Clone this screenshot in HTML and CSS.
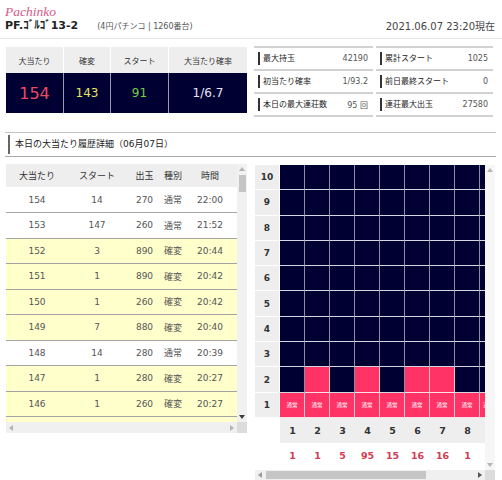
FILE: index.html
```html
<!DOCTYPE html>
<html lang="ja">
<head>
<meta charset="utf-8">
<title>PF.ｺﾞﾙｺﾞ13-2</title>
<link rel="stylesheet" href="styles.css">
</head>
<body>
<header class="top">
  <div class="brand">
    <div class="logo">Pachinko</div>
    <div class="machine"><span class="name">PF.ｺﾞﾙｺﾞ13-2</span><span class="sub">(4円パチンコ | 1260番台)</span></div>
  </div>
  <div class="date">2021.06.07 23:20現在</div>
</header>

<section class="summary">
  <div class="big">
    <div class="h">大当たり</div>
    <div class="h">確変</div>
    <div class="h">スタート</div>
    <div class="h">大当たり確率</div>
    <div class="v red">154</div>
    <div class="v yellow">143</div>
    <div class="v green">91</div>
    <div class="v pale">1/6.7</div>
  </div>
  <div class="facts">
    <ul class="fact-col">
      <li><span class="label">最大持玉</span><span class="value">42190</span></li>
      <li><span class="label">初当たり確率</span><span class="value">1/93.2</span></li>
      <li><span class="label">本日の最大連荘数</span><span class="value">95 回</span></li>
    </ul>
    <ul class="fact-col narrow">
      <li><span class="label">累計スタート</span><span class="value">1025</span></li>
      <li><span class="label">前日最終スタート</span><span class="value">0</span></li>
      <li><span class="label">連荘最大出玉</span><span class="value">27580</span></li>
    </ul>
  </div>
</section>

<h2 class="section-title"><span>本日の大当たり履歴詳細（06月07日）</span></h2>

<section class="detail">
  <div class="panel history">
    <div class="view">
      <table>
        <colgroup><col class="c1"><col class="c2"><col class="c3"><col class="c4"><col class="c5"></colgroup>
        <thead>
          <tr><th>大当たり</th><th>スタート</th><th>出玉</th><th>種別</th><th>時間</th></tr>
        </thead>
        <tbody>
          <tr><td>154</td><td>14</td><td>270</td><td>通常</td><td>22:00</td></tr>
          <tr><td>153</td><td>147</td><td>260</td><td>通常</td><td>21:52</td></tr>
          <tr class="kk"><td>152</td><td>3</td><td>890</td><td>確変</td><td>20:44</td></tr>
          <tr class="kk"><td>151</td><td>1</td><td>890</td><td>確変</td><td>20:42</td></tr>
          <tr class="kk"><td>150</td><td>1</td><td>260</td><td>確変</td><td>20:42</td></tr>
          <tr class="kk"><td>149</td><td>7</td><td>880</td><td>確変</td><td>20:40</td></tr>
          <tr><td>148</td><td>14</td><td>280</td><td>通常</td><td>20:39</td></tr>
          <tr class="kk"><td>147</td><td>1</td><td>280</td><td>確変</td><td>20:27</td></tr>
          <tr class="kk"><td>146</td><td>1</td><td>260</td><td>確変</td><td>20:27</td></tr>
          <tr class="kk"><td></td><td></td><td></td><td></td><td></td></tr>
        </tbody>
      </table>
    </div>
    <div class="vbar">
      <span class="arr"><svg width="6" height="4" viewBox="0 0 6 4"><path d="M3 0L6 4H0z" fill="#b4b4b4"/></svg></span>
      <span class="thumb"></span>
      <span class="fill"></span>
      <span class="arr"><svg width="6" height="4" viewBox="0 0 6 4"><path d="M0 0H6L3 4z" fill="#3c3c3c"/></svg></span>
    </div>
    <div class="hbar">
      <span class="arr"><svg width="4" height="6" viewBox="0 0 4 6"><path d="M0 3L4 0V6z" fill="#b4b4b4"/></svg></span>
      <span class="fill"></span>
      <span class="arr"><svg width="4" height="6" viewBox="0 0 4 6"><path d="M4 3L0 0V6z" fill="#b4b4b4"/></svg></span>
    </div>
    <div class="corner"></div>
  </div>

  <div class="panel graph">
    <div class="view">
      <div class="chart">
        <div class="yl">10</div><div class="c"></div><div class="c"></div><div class="c"></div><div class="c"></div><div class="c"></div><div class="c"></div><div class="c"></div><div class="c"></div><div class="c"></div>
        <div class="yl">9</div><div class="c"></div><div class="c"></div><div class="c"></div><div class="c"></div><div class="c"></div><div class="c"></div><div class="c"></div><div class="c"></div><div class="c"></div>
        <div class="yl">8</div><div class="c"></div><div class="c"></div><div class="c"></div><div class="c"></div><div class="c"></div><div class="c"></div><div class="c"></div><div class="c"></div><div class="c"></div>
        <div class="yl">7</div><div class="c"></div><div class="c"></div><div class="c"></div><div class="c"></div><div class="c"></div><div class="c"></div><div class="c"></div><div class="c"></div><div class="c"></div>
        <div class="yl">6</div><div class="c"></div><div class="c"></div><div class="c"></div><div class="c"></div><div class="c"></div><div class="c"></div><div class="c"></div><div class="c"></div><div class="c"></div>
        <div class="yl">5</div><div class="c"></div><div class="c"></div><div class="c"></div><div class="c"></div><div class="c"></div><div class="c"></div><div class="c"></div><div class="c"></div><div class="c"></div>
        <div class="yl">4</div><div class="c"></div><div class="c"></div><div class="c"></div><div class="c"></div><div class="c"></div><div class="c"></div><div class="c"></div><div class="c"></div><div class="c"></div>
        <div class="yl">3</div><div class="c"></div><div class="c"></div><div class="c"></div><div class="c"></div><div class="c"></div><div class="c"></div><div class="c"></div><div class="c"></div><div class="c"></div>
        <div class="yl">2</div><div class="c"></div><div class="c p"></div><div class="c"></div><div class="c p"></div><div class="c"></div><div class="c p"></div><div class="c p"></div><div class="c"></div><div class="c"></div>
        <div class="yl">1</div><div class="c p">通常</div><div class="c p">通常</div><div class="c p">通常</div><div class="c p">通常</div><div class="c p">通常</div><div class="c p">通常</div><div class="c p">通常</div><div class="c p">通常</div><div class="c p edge">通常</div>
        <div class="blank"></div><div class="x">1</div><div class="x">2</div><div class="x">3</div><div class="x">4</div><div class="x">5</div><div class="x">6</div><div class="x">7</div><div class="x">8</div><div class="x"></div>
        <div class="blank"></div><div class="n">1</div><div class="n">1</div><div class="n">5</div><div class="n">95</div><div class="n">15</div><div class="n">16</div><div class="n">16</div><div class="n">1</div><div class="n"></div>
      </div>
    </div>
    <div class="vbar light">
      <span class="arr"><svg width="6" height="4" viewBox="0 0 6 4"><path d="M3 0L6 4H0z" fill="#b4b4b4"/></svg></span>
      <span class="fill"></span>
      <span class="arr"><svg width="6" height="4" viewBox="0 0 6 4"><path d="M0 0H6L3 4z" fill="#b4b4b4"/></svg></span>
    </div>
    <div class="hbar">
      <span class="arr"><svg width="4" height="6" viewBox="0 0 4 6"><path d="M0 3L4 0V6z" fill="#9a9a9a"/></svg></span>
      <span class="hthumb"></span>
      <span class="fill"></span>
      <span class="arr"><svg width="4" height="6" viewBox="0 0 4 6"><path d="M4 3L0 0V6z" fill="#555"/></svg></span>
    </div>
    <div class="corner"></div>
  </div>
</section>
</body>
</html>
```
FILE: styles.css
```css
* { box-sizing: border-box; }

body {
  margin: 0;
  background: #fff;
  color: #333;
  font-family: "DejaVu Sans", "Noto Sans CJK JP", sans-serif;
}

/* header */
.top {
  display: flex;
  justify-content: space-between;
  height: 39px;
  padding: 5px 7px 0 5px;
  border-bottom: 1px solid #e4e4e4;
}
.logo {
  font-family: "Liberation Serif", serif;
  font-style: italic;
  font-size: 13.5px;
  line-height: 14px;
  color: #d8588a;
}
.machine {
  display: flex;
  align-items: baseline;
  line-height: 13px;
}
.name {
  font-size: 11px;
  font-weight: bold;
  color: #222;
}
.sub {
  margin-left: 19px;
  font-size: 8px;
  color: #555;
}
.date {
  margin-top: 15px;
  font-size: 10px;
  line-height: 13px;
  color: #444;
}

/* summary */
.summary {
  display: flex;
  gap: 7px;
  margin-top: 7px;
  padding-left: 6px;
}
.big {
  display: grid;
  grid-template-columns: 57px 47px 58px 79px;
  grid-template-rows: 26px 40px;
  width: 241px;
  margin-top: 1px;
}
.big .h {
  display: flex;
  align-items: center;
  justify-content: center;
  background: #eeeeee;
  border-left: 1px solid #fff;
  font-size: 8px;
  color: #333;
}
.big .v {
  display: flex;
  align-items: center;
  justify-content: center;
  background: #000033;
  border-left: 1px solid #9a9aae;
  font-size: 12px;
}
.big .h:first-child,
.big .v.red { border-left: 0; }
.big .red { color: #ec4a60; font-size: 16px; }
.big .yellow { color: #e6e65a; }
.big .green { color: #6fcf45; }
.big .pale { color: #e6e6fa; }

.facts {
  display: flex;
  gap: 3px;
}
.fact-col {
  width: 119px;
  margin: 0;
  padding: 0;
  list-style: none;
  border-top: 2px solid #d2d2d2;
}
.fact-col.narrow { width: 117px; }
.fact-col li {
  display: flex;
  align-items: center;
  justify-content: space-between;
  height: 23px;
  padding: 0 5px 0 4px;
  border-bottom: 2px solid #d2d2d2;
  font-size: 8px;
}
.label {
  border-left: 2px solid #333;
  padding-left: 3px;
  line-height: 13px;
  color: #222;
}
.value { color: #555; }

/* section title */
.section-title {
  display: flex;
  align-items: center;
  height: 25px;
  margin: 15px 6px 0 5px;
  padding: 0 3px;
  border-top: 1px solid #c4c4c4;
  border-bottom: 1px solid #a8a8a8;
  font-size: 9px;
  font-weight: normal;
  color: #222;
}
.section-title span {
  border-left: 2px solid #666;
  padding-left: 5px;
  line-height: 19px;
}

/* detail panels */
.detail {
  display: flex;
  align-items: flex-start;
  gap: 8px;
  margin-top: 7px;
  padding-left: 6px;
}
.panel {
  display: grid;
  grid-template-columns: 1fr 10px;
}
.panel.history {
  width: 241px;
  height: 269px;
  grid-template-rows: 1fr 11px;
}
.panel.graph {
  width: 240px;
  height: 315px;
  margin-top: 1px;
  grid-template-rows: 1fr 10px;
}
.view {
  overflow: hidden;
  min-width: 0;
}

/* scroll bars */
.vbar {
  display: flex;
  flex-direction: column;
  align-items: center;
  background: #f1f1f1;
}
.vbar.light { background: #f6f6f6; }
.hbar {
  display: flex;
  align-items: center;
  background: #f0f0f0;
}
.arr {
  display: flex;
  align-items: center;
  justify-content: center;
  flex: none;
  width: 10px;
  height: 10px;
}
.hbar .arr { height: 100%; }
.thumb {
  width: 7px;
  height: 17px;
  margin-top: 1px;
  background: #c4c4c4;
}
.hthumb {
  width: 160px;
  height: 8px;
  margin-left: 1px;
  background: #c6c6c6;
}
.fill { flex: 1; }
.corner { background: #dcdcdc; }

/* history table */
table {
  width: 231px;
  border-collapse: collapse;
  table-layout: fixed;
}
col.c1 { width: 62px; }
col.c2 { width: 58px; }
col.c3 { width: 37px; }
col.c4 { width: 20px; }
col.c5 { width: 54px; }
th {
  height: 23px;
  padding: 0;
  background: #eeeeee;
  font-size: 9px;
  font-weight: normal;
  color: #333;
  white-space: nowrap;
}
td {
  height: 25.5px;
  padding: 0;
  border-bottom: 1px solid #a4a4a4;
  text-align: center;
  font-size: 9px;
  color: #555;
  white-space: nowrap;
}
tr.kk td { background: #ffffcc; }

/* chart */
.chart {
  display: grid;
  grid-template-columns: repeat(10, 25px);
  grid-template-rows: repeat(10, 25.3px) 25px 26px;
  width: 250px;
}
.yl {
  display: flex;
  align-items: center;
  justify-content: center;
  background: #eeeeee;
  border-right: 1px solid #fff;
  border-bottom: 1px solid #fff;
  font-size: 9px;
  font-weight: bold;
  color: #333;
}
.c {
  display: flex;
  align-items: center;
  justify-content: center;
  background: #000033;
  border-right: 1px solid #8c8ca4;
  border-bottom: 1px solid #d6d6e0;
  font-family: "Noto Sans CJK JP", sans-serif;
  font-size: 5.5px;
  color: #fff;
}
.c.p {
  background: #ff3366;
  border-right-color: #ffc0d0;
  border-bottom-color: #ffe0e8;
}
.c.edge {
  justify-content: flex-start;
  padding-left: 3px;
}
.blank { background: #fff; }
.x {
  display: flex;
  align-items: center;
  justify-content: center;
  background: #eeeeee;
  font-size: 9.5px;
  font-weight: bold;
  color: #333;
}
.n {
  display: flex;
  align-items: center;
  justify-content: center;
  background: #fff;
  font-size: 9.5px;
  font-weight: bold;
  color: #d23c52;
}
```
